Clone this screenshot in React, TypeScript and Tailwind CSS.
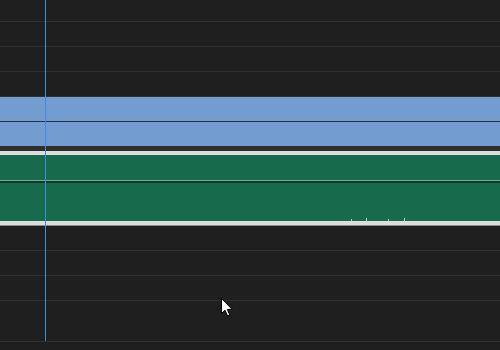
import React from 'react'

function Row({ h }: { h: string }) {
  return (
    <>
      <div className={`${h} bg-[#1f1f1f]`} />
      <div className="h-px bg-[#303030]" />
    </>
  )
}

function Cursor() {
  return (
    <svg width="13" height="19" viewBox="0 0 13 19" className="absolute left-[221px] top-[298px]">
      <path
        d="M0.5 0.5 L0.5 15.5 L4 12.2 L6.6 18 L8.8 17 L6.3 11.4 L11.2 11.4 Z"
        fill="#ffffff"
        stroke="#000000"
        strokeWidth="1"
        strokeLinejoin="round"
      />
    </svg>
  )
}

export default function App() {
  const ticks = [351, 366, 388, 404]

  return (
    <div className="relative w-[500px] h-[350px] overflow-hidden bg-[#1f1f1f]">
      <div className="flex flex-col">
        {/* empty tracks above */}
        <Row h="h-[21px]" />
        <Row h="h-[24px]" />
        <Row h="h-[24px]" />
        <Row h="h-[24px]" />

        {/* blue clip */}
        <div className="h-[24px] bg-[#739dd1]" />
        <div className="h-px bg-[#2b2f38]" />
        <div className="h-[24px] bg-[#739dd1]" />

        <div className="h-[5px] bg-[#2e2e2e]" />
        <div className="h-[4px] bg-[#dedede]" />

        {/* green clip */}
        <div className="relative flex flex-col">
          <div className="h-[25px] bg-[#176b4c]" />
          <div className="h-px bg-[#7aa896]" />
          <div className="h-[2px] bg-[#103b2b]" />
          <div className="h-[38px] bg-[#176b4c]" />
          {ticks.map((x, i) => (
            <div
              key={x}
              className={`absolute bottom-0 w-px bg-[#b9cfc5] ${i % 2 ? 'h-[3px]' : 'h-[2px]'}`}
              style={{ left: x }}
            />
          ))}
        </div>
        <div className="h-[4px] bg-[#dedede]" />
        <div className="h-px bg-[#8a8a8a]" />

        {/* empty tracks below */}
        <Row h="h-[24px]" />
        <Row h="h-[24px]" />
        <Row h="h-[24px]" />
        <Row h="h-[40px]" />
        <div className="h-[8px] bg-[#1f1f1f]" />
      </div>

      {/* playhead */}
      <div className="absolute left-[45px] top-0 h-[341px] w-px bg-[#3b8fe0]" />

      <Cursor />
    </div>
  )
}
